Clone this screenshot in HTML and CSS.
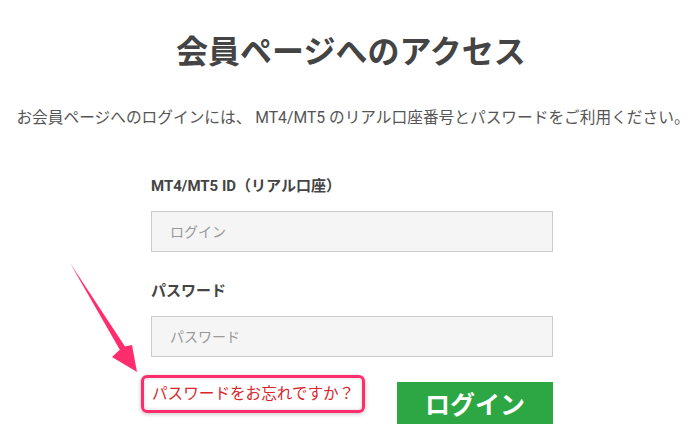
FILE: index.html
```html
<!DOCTYPE html>
<html lang="ja">
<head>
  <meta charset="UTF-8">
  <title>会員ページへのアクセス</title>
  <link rel="stylesheet" href="styles.css">
</head>
<body>

  <h1>会員ページへのアクセス</h1>
  <p class="lead">お会員ページへのログインには、 MT4/MT5 のリアル口座番号とパスワードをご利用ください。</p>

  <form class="login-form">
    <label for="login">MT4/MT5 ID（リアル口座）</label>
    <input type="text" id="login" placeholder="ログイン">

    <label for="password">パスワード</label>
    <input type="password" id="password" placeholder="パスワード">

    <div class="actions">
      <span class="highlight"><a href="#">パスワードをお忘れですか？</a></span>
      <button type="submit">ログイン</button>
    </div>
  </form>

  <!-- annotation arrow pointing at the forgot link -->
  <svg class="arrow" width="90" height="130" viewBox="0 0 90 130">
    <path d="M6 3 L61 86.6 L68 85 L73 112 L48 97 L55.8 89.8 Z" fill="#ff2d6e"/>
  </svg>

</body>
</html>
```

FILE: styles.css
```css
body {
  margin: 0;
  background: #ffffff;
  font-family: Roboto, "Noto Sans CJK JP", sans-serif;
  color: #444;
  position: relative;
  height: 444px;
  overflow: hidden;
}

h1 {
  margin: 0;
  padding-top: 30px;
  padding-left: 6px;
  text-align: center;
  font-size: 32px;
  font-weight: 700;
  line-height: 44px;
  color: #444;
}

.lead {
  margin: 0;
  padding-top: 34px;
  padding-left: 10px;
  text-align: center;
  font-size: 15.7px;
  line-height: 20px;
  color: #555;
}

.login-form {
  width: 402px;
  margin: 0 auto;
  padding-left: 8px;
  display: flex;
  flex-direction: column;
}

label {
  font-size: 15px;
  font-weight: 700;
  line-height: 20px;
  color: #444;
  margin-top: 48px;
}

label + input {
  margin-top: 15px;
}

label[for="password"] {
  margin-top: 29px;
}

input {
  box-sizing: border-box;
  height: 41px;
  border: 1px solid #ccc;
  background: #f5f5f5;
  padding: 0 18px;
  font-family: Roboto, "Noto Sans CJK JP", sans-serif;
  font-size: 14px;
  color: #444;
  outline: none;
}

input::placeholder {
  color: #999;
}

.actions {
  display: flex;
  justify-content: space-between;
  align-items: flex-start;
  margin-top: 18px;
}

.highlight {
  margin-left: -10px;
  padding: 6px 8px;
  border: 3px solid #ff2d6e;
  border-radius: 6px;
  box-shadow: 0 1px 4px rgba(0, 0, 0, 0.25), inset 0 0 4px rgba(0, 0, 0, 0.15);
}

.highlight a {
  font-size: 15.6px;
  line-height: 20px;
  color: #d9262d;
  text-decoration: none;
  display: block;
}

button {
  margin-top: 7px;
  width: 156px;
  height: 42px;
  border: none;
  background: #2ca744;
  color: #fff;
  font-family: Roboto, "Noto Sans CJK JP", sans-serif;
  font-size: 25px;
  font-weight: 700;
  cursor: pointer;
}

.arrow {
  position: absolute;
  left: 64px;
  top: 260px;
}
```
